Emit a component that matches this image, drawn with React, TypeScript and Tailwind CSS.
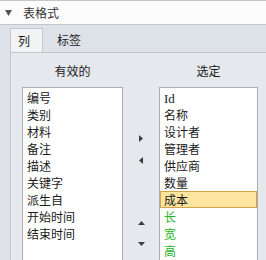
import React from "react";

const left = ["编号", "类别", "材料", "备注", "描述", "关键字", "派生自", "开始时间", "结束时间"];
const right: { t: string; sel?: boolean; green?: boolean; serif?: boolean }[] = [
  { t: "Id", serif: true },
  { t: "名称" },
  { t: "设计者" },
  { t: "管理者" },
  { t: "供应商" },
  { t: "数量" },
  { t: "成本", sel: true },
  { t: "长", green: true },
  { t: "宽", green: true },
  { t: "高", green: true },
];

export default function App() {
  return (
    <div
      className="w-[266px] h-[260px] overflow-hidden bg-[#dde1e8] text-[12px] text-[#1b1b1b] flex flex-col"
      style={{ fontFamily: '"Noto Sans CJK SC", "Noto Sans", sans-serif' }}
    >
      {/* header */}
      <div className="h-[25px] shrink-0 bg-[#fcfcfc] border-t border-b border-[#c3c7cc] flex items-center pl-[5px]">
        <svg width="7" height="6" viewBox="0 0 7 6" className="shrink-0">
          <path d="M0 0 H7 L3.5 6 Z" fill="#555" />
        </svg>
        <span className="ml-[11px] text-[12px] text-[#333] leading-none">表格式</span>
      </div>

      {/* tab strip */}
      <div className="h-[27px] shrink-0 flex items-end pl-[10px]">
        <div className="w-[33px] h-[24px] bg-[#f2f3f5] border border-b-0 border-[#c3c7cc] flex items-center pl-[7px] leading-none">
          列
        </div>
        <div className="ml-[14px] h-[24px] flex items-center leading-none">标签</div>
      </div>

      {/* panel */}
      <div className="flex-1 ml-[10px] bg-[#e5e8ec] border-l border-t border-[#c3c7cc] flex flex-col pl-[11px]">
        <div className="flex h-[34px] items-center pt-[2px]">
          <div className="w-[101px] text-center leading-none">有效的</div>
          <div className="w-[36px]" />
          <div className="w-[99px] text-center leading-none">选定</div>
        </div>
        <div className="flex flex-1">
          {/* left list */}
          <div className="w-[101px] h-[200px] bg-white border border-[#abadb3] pt-[1px]">
            {left.map((t) => (
              <div key={t} className="h-[17px] leading-[17px] pl-[4px]">
                {t}
              </div>
            ))}
          </div>
          {/* arrows */}
          <div className="w-[36px] flex flex-col items-center pt-[48px]">
            <svg width="4" height="7" viewBox="0 0 4 7">
              <path d="M0 0 L4 3.5 L0 7 Z" fill="#3c3c3c" />
            </svg>
            <svg width="4" height="7" viewBox="0 0 4 7" className="mt-[15px]">
              <path d="M4 0 L0 3.5 L4 7 Z" fill="#3c3c3c" />
            </svg>
            <svg width="7" height="4" viewBox="0 0 7 4" className="mt-[57px]">
              <path d="M0 4 L3.5 0 L7 4 Z" fill="#3c3c3c" />
            </svg>
            <svg width="7" height="4" viewBox="0 0 7 4" className="mt-[17px]">
              <path d="M0 0 L3.5 4 L7 0 Z" fill="#3c3c3c" />
            </svg>
          </div>
          {/* right list */}
          <div className="w-[99px] h-[200px] bg-white border border-[#abadb3] pt-[1px]">
            {right.map((r) => (
              <div
                key={r.t}
                className={
                  r.sel
                    ? "h-[17px] leading-[15px] pl-[3px] bg-[#fde49f] border border-[#d5a34a]"
                    : "h-[17px] leading-[17px] pl-[4px]"
                }
              >
                <span
                  className={r.green ? "text-[#26b526]" : ""}
                  style={r.serif ? { fontFamily: '"Liberation Serif", serif', fontSize: "13px" } : undefined}
                >
                  {r.t}
                </span>
              </div>
            ))}
          </div>
        </div>
      </div>
    </div>
  );
}
